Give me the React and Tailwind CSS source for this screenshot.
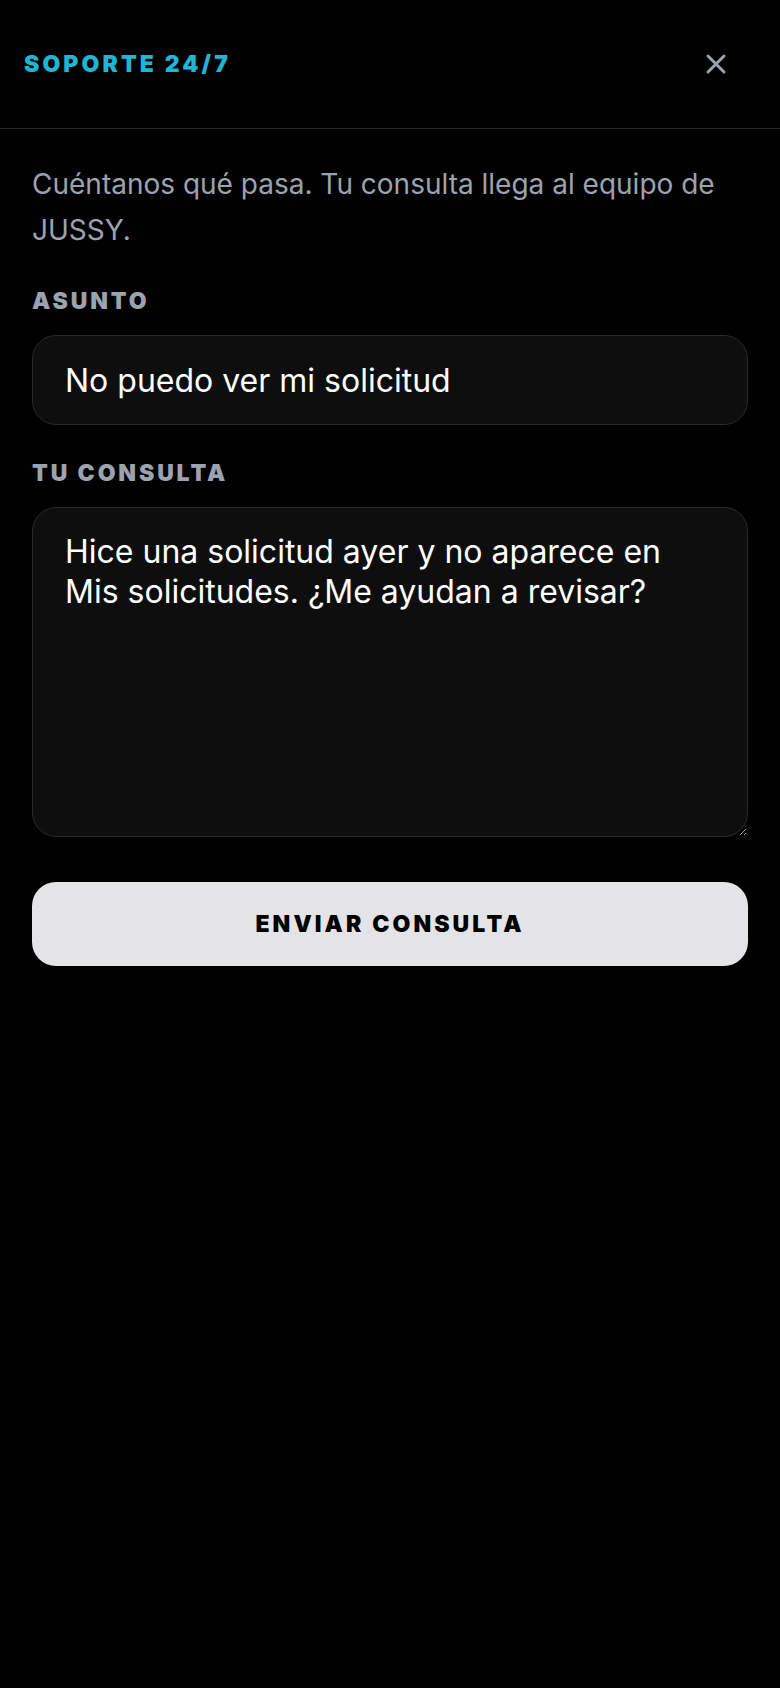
import React from "react";

export default function App() {
  return (
    <div
      className="min-h-screen w-full bg-black text-white"
      style={{ fontFamily: "Inter, 'Noto Sans', sans-serif" }}
    >
      <header className="flex h-[129px] items-center justify-between border-b border-[#262626] pl-6 pr-[48px]">
        <h1 className="text-[23px] font-black uppercase leading-[24px] tracking-[0.135em] text-[#1fb6d5]">
          SOPORTE 24/7
        </h1>
        <button aria-label="Cerrar" className="flex h-8 w-8 items-center justify-center text-[#9ca3af]">
          <svg width="32" height="32" viewBox="0 0 24 24" fill="none" stroke="currentColor" strokeWidth="2.25" strokeLinecap="round" strokeLinejoin="round">
            <path d="M18 6 6 18" />
            <path d="m6 6 12 12" />
          </svg>
        </button>
      </header>

      <main className="flex flex-col px-8 pt-[33px]">
        <p className="text-[28px] leading-[45.5px] text-[#9ca3af]">
          Cuéntanos qué pasa. Tu consulta llega al equipo de JUSSY.
        </p>

        <label className="mt-[36px] text-[23px] font-black uppercase leading-[24px] tracking-[0.125em] text-[#9ca3af]">
          ASUNTO
        </label>
        <input
          type="text"
          defaultValue="No puedo ver mi solicitud"
          className="mt-[22px] h-[90px] w-full rounded-[24px] border border-[#2a2a2a] bg-[#0e0e0e] px-8 text-[32px] text-white outline-none"
          style={{ fontFamily: "Inter, sans-serif" }}
        />

        <label className="mt-[36px] text-[23px] font-black uppercase leading-[24px] tracking-[0.125em] text-[#9ca3af]">
          TU CONSULTA
        </label>
        <textarea
          defaultValue="Hice una solicitud ayer y no aparece en Mis solicitudes. ¿Me ayudan a revisar?"
          className="mt-[22px] h-[330px] w-full rounded-[24px] border border-[#2a2a2a] bg-[#0e0e0e] px-8 py-6 text-[32px] leading-[40px] text-white outline-none"
          style={{ fontFamily: "Inter, sans-serif", colorScheme: "dark" }}
        />

        <button className="mt-[45px] flex h-[84px] w-full items-center justify-center rounded-[24px] bg-[#e4e4e7] text-[23px] font-black uppercase leading-[24px] tracking-[0.135em] text-black">
          ENVIAR CONSULTA
        </button>
      </main>
    </div>
  );
}
